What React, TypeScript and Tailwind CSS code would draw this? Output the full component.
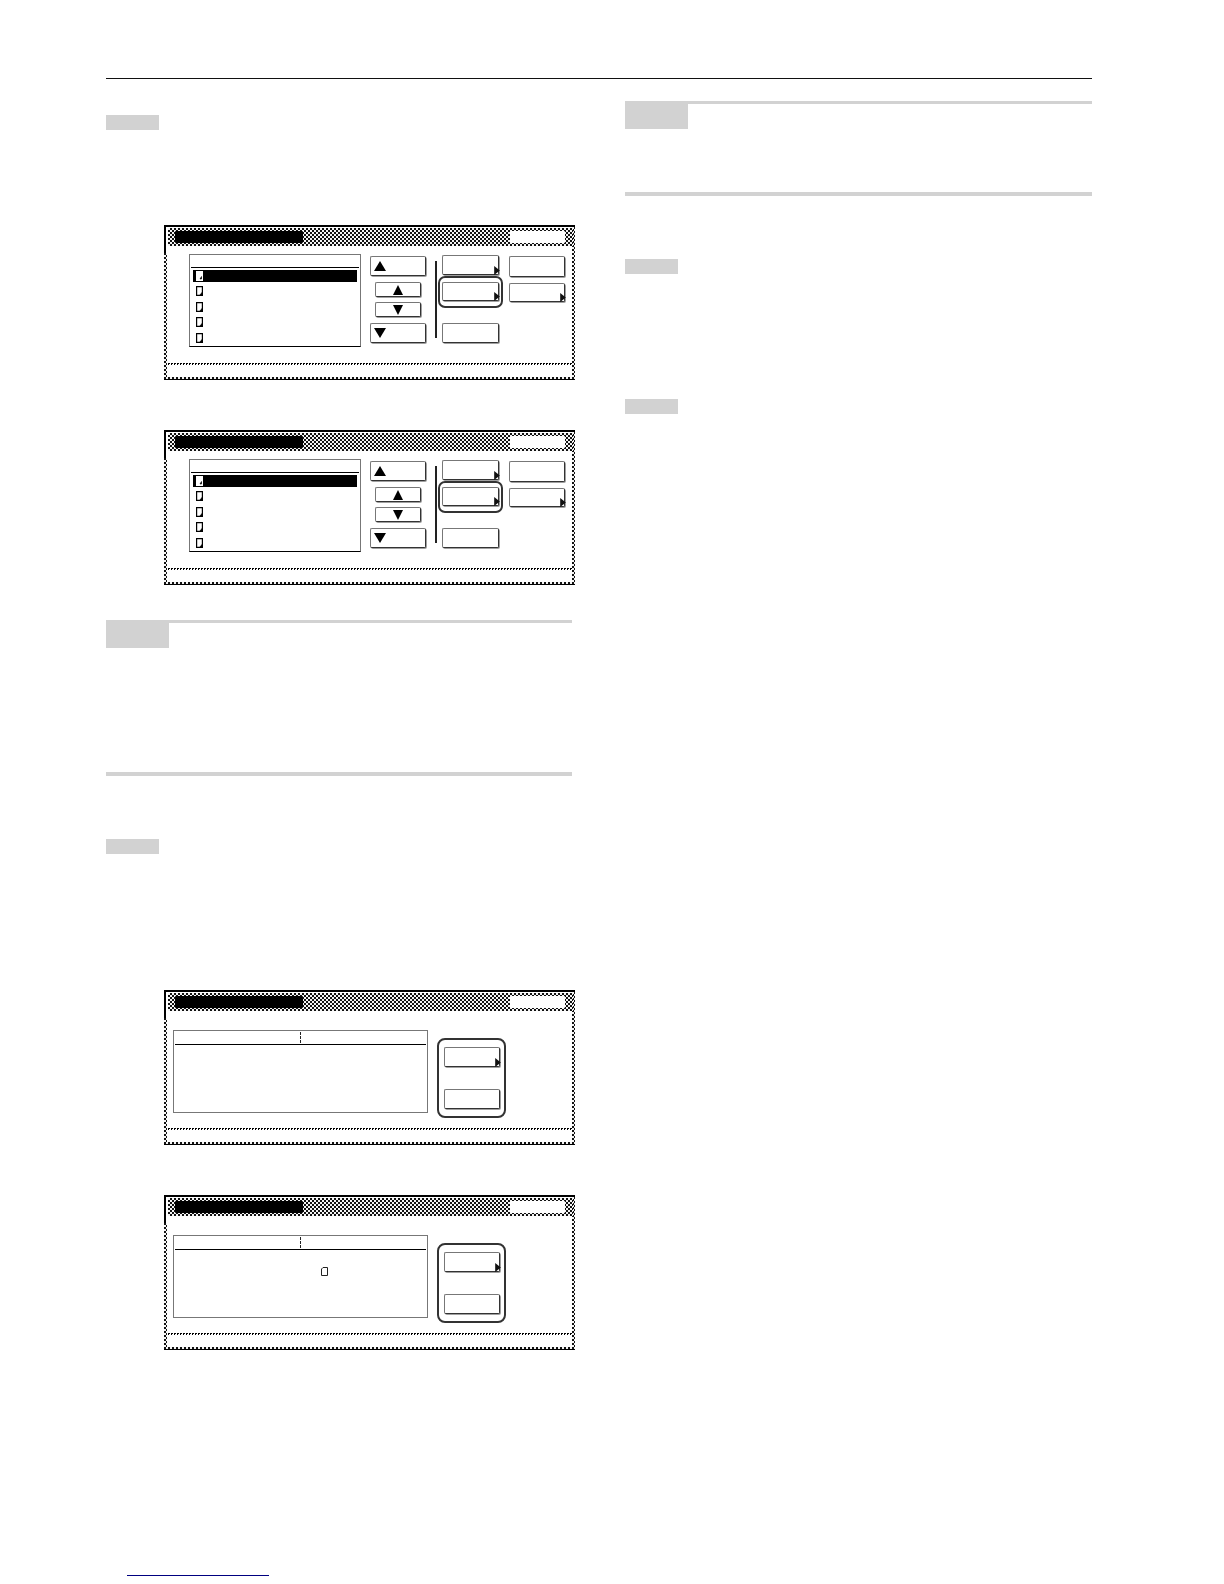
const checker = 'bg-[repeating-conic-gradient(#111_0_25%,#f4f4f4_0_50%)] bg-[length:4px_4px]';
const fineChecker = 'bg-[repeating-conic-gradient(#000_0_25%,#fff_0_50%)] bg-[length:3px_3px]';
const btn =
  'relative shrink-0 bg-white rounded-[2px] border border-t-[#777] border-l-[#777] border-r-[#333] border-b-[#333] shadow-[1px_1px_0_#a0a0a0]';

function Triangle({ down, className }: { down?: boolean; className: string }) {
  return (
    <svg viewBox="0 0 12 10" preserveAspectRatio="none" className={className}>
      <polygon points={down ? '0,0 12,0 6,10' : '6,0 12,10 0,10'} fill="#000" />
    </svg>
  );
}

function More() {
  // little arrow in the lower right corner of a key
  return (
    <svg viewBox="0 0 5 8" className="absolute right-[-2px] bottom-[-1px] w-[6px] h-[9px]">
      <polygon points="0,0 5,4 0,8" fill="#111" />
    </svg>
  );
}

function Doc({ inverted }: { inverted?: boolean }) {
  return (
    <svg viewBox="0 0 7 10" className="w-[7px] h-[10px] shrink-0">
      <path d="M0.6 0.6H6.4V9.4H0.6Z" fill="#fff" stroke={inverted ? '#fff' : '#000'} strokeWidth="1.2" />
      {inverted ? (
        <path d="M4 8H5.5V5.5Z" fill="#000" stroke="#000" strokeWidth="0.6" />
      ) : (
        <path d="M3.5 9.5H6.5V6Z" fill="#000" stroke="#000" strokeWidth="0.8" />
      )}
    </svg>
  );
}

function Screen({ children }: { children: React.ReactNode }) {
  return (
    <div className={`ml-[58px] w-[411px] h-[155px] flex flex-col border-t-2 border-b border-black px-[3px] ${checker}`}>
      {/* title bar */}
      <div className="-ml-[3px] h-[26px] shrink-0 bg-white border-l-2 border-black pl-[2px] pt-[1px]">
        <div className={`-mr-px h-[18px] flex items-center justify-between pl-[7px] pr-[8px] ${checker}`}>
          <div className="w-[128px] h-[12px] bg-black rounded-[1px]" />
          <div className="w-[55px] h-[12px] bg-white rounded-[1px]" />
        </div>
      </div>
      <div className="h-[110px] shrink-0 bg-white flex">{children}</div>
      <div className={`h-[2px] shrink-0 ${fineChecker}`} />
      <div className="h-[12px] shrink-0 bg-white" />
    </div>
  );
}

function ListScreen() {
  return (
    <Screen>
      {/* list */}
      <div className="ml-[22px] mt-[1px] w-[172px] h-[93px] border border-[#777] border-b-black flex flex-col px-[1px]">
        <div className="h-[13px] border-b border-black" />
        <div className="mt-[2px] mx-[2px] h-[12px] bg-black flex items-center pl-[3px]">
          <Doc inverted />
        </div>
        <div className="mt-[4px] flex flex-col gap-[5.5px] pl-[5px]">
          <Doc />
          <Doc />
          <Doc />
          <Doc />
        </div>
      </div>

      {/* scroll keys */}
      <div className="ml-[9px] mt-[3px] w-[56px] flex flex-col items-center">
        <div className={`${btn} w-[56px] h-[20px] flex items-center pl-[3px]`}>
          <Triangle className="w-[12px] h-[10px]" />
        </div>
        <div className={`${btn} mt-[6px] w-[46px] h-[15px] flex items-center justify-center`}>
          <Triangle className="w-[10px] h-[10px]" />
        </div>
        <div className={`${btn} mt-[5px] w-[46px] h-[15px] flex items-center justify-center`}>
          <Triangle down className="w-[10px] h-[10px]" />
        </div>
        <div className={`${btn} mt-[6px] w-[56px] h-[20px] flex items-center pl-[3px]`}>
          <Triangle down className="w-[12px] h-[10px]" />
        </div>
      </div>

      <div className="ml-[9px] mt-[8px] w-[2px] h-[77px] bg-[#222]" />

      {/* function keys */}
      <div className="relative ml-[5px] mt-[2px] w-[57px] flex flex-col">
        <div className={`${btn} w-[57px] h-[20px]`}>
          <More />
        </div>
        <div className={`${btn} mt-[7px] w-[57px] h-[19px]`}>
          <More />
        </div>
        <div className={`${btn} mt-[22px] w-[57px] h-[20px]`} />
        {/* highlight round the key */}
        <div className="absolute left-[-4px] top-[21px] w-[65px] h-[32px] rounded-[7px] border-2 border-[#333]" />
      </div>

      <div className="ml-[10px] mt-[3px] w-[56px] flex flex-col">
        <div className={`${btn} w-[56px] h-[21px]`} />
        <div className={`${btn} mt-[6px] w-[56px] h-[19px]`}>
          <More />
        </div>
      </div>
    </Screen>
  );
}

function TableScreen({ showDoc }: { showDoc?: boolean }) {
  return (
    <Screen>
      <div className="relative ml-[6px] mt-[12px] w-[255px] h-[83px] border border-[#777] px-[1px]">
        <div className="h-[14px] border-b border-black flex justify-center pr-[1px]">
          <div className="mt-[1px] h-[11px] border-l border-dashed border-[#222]" />
        </div>
        {showDoc && (
          <svg viewBox="0 0 7 9" className="absolute left-[147px] top-[31px] w-[7px] h-[9px]">
            <path d="M2 0.5H6.5V8.5H0.5V2Z" fill="#fff" stroke="#222" />
          </svg>
        )}
      </div>

      <div className="ml-[9px] mt-[20px] w-[69px] h-[80px] rounded-[8px] border-2 border-[#333] flex flex-col items-center pt-[7px]">
        <div className={`${btn} w-[56px] h-[20px]`}>
          <More />
        </div>
        <div className={`${btn} mt-[22px] w-[56px] h-[20px]`} />
      </div>
    </Screen>
  );
}

function StepLabel({ className }: { className: string }) {
  return <div className={`w-[53px] h-[15px] bg-[#d2d2d2] ${className}`} />;
}

function Note({ className }: { className: string }) {
  return (
    <div className={`flex flex-col justify-between ${className}`}>
      <div className="border-t-[3px] border-[#d2d2d2]">
        <div className="w-[63px] h-[25px] bg-[#d2d2d2]" />
      </div>
      <div className="h-[4px] bg-[#d2d2d2]" />
    </div>
  );
}

export default function App() {
  return (
    <div className="w-[1224px] h-[1584px] bg-white flex flex-col pt-[78px] pl-[106px] overflow-hidden">
      <div className="w-[986px] h-px shrink-0 bg-[#111]" />

      <div className="flex gap-[53px]">
        {/* left column */}
        <div className="w-[466px] flex flex-col">
          <StepLabel className="mt-[36px]" />
          <div className="mt-[95px]">
            <ListScreen />
          </div>
          <div className="mt-[50px]">
            <ListScreen />
          </div>
          <Note className="mt-[35px] h-[156px]" />
          <StepLabel className="mt-[63px]" />
          <div className="mt-[136px]">
            <TableScreen />
          </div>
          <div className="mt-[50px]">
            <TableScreen showDoc />
          </div>
        </div>

        {/* right column */}
        <div className="w-[467px] flex flex-col">
          <Note className="mt-[22px] h-[95px]" />
          <StepLabel className="mt-[63px]" />
          <StepLabel className="mt-[125px]" />
        </div>
      </div>

      <div className="mt-[225px] ml-[21px] w-[142px] h-px shrink-0 bg-[#000080]" />
    </div>
  );
}
